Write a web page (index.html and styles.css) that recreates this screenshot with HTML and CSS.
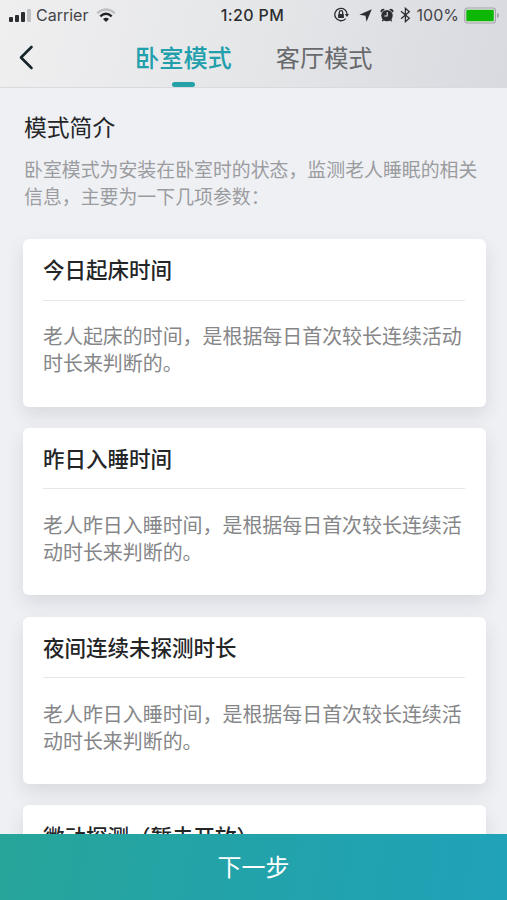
FILE: index.html
```html
<!DOCTYPE html>
<html lang="zh-CN">
<head>
<meta charset="utf-8">
<meta name="viewport" content="width=device-width, initial-scale=1">
<title>模式简介</title>
<link rel="stylesheet" href="styles.css">
</head>
<body>
<div class="app">
  <header class="header">
    <div class="status">
      <div class="status-left">
        <svg class="signal" width="24" height="15" viewBox="0 0 24 15"><rect x="1" y="9" width="4" height="5" rx="1"/><rect x="7" y="7" width="4" height="7" rx="1"/><rect x="13" y="4" width="4" height="10" rx="1"/><rect x="19" y="1" width="4" height="13" rx="1" fill="#bfc0c2"/></svg>
        <span class="carrier">Carrier</span>
        <svg class="wifi" width="20" height="15" viewBox="0 0 20 15" fill="none" stroke-width="2.4"><path d="M1.2 5.2Q10-2 18.8 5.2" stroke="#bfc0c2"/><path d="M4.3 8.3Q10 3.2 15.7 8.3" stroke="#222"/><path d="M7 11Q10 8.5 13 11L10 14Z" fill="#222"/></svg>
      </div>
      <span class="clock">1:20 PM</span>
      <div class="status-right">
        <svg class="lock" width="16" height="16" viewBox="0 0 16 16" fill="none" stroke="#2b2d30" stroke-width="1.3"><path d="M12.7 11.6A6.2 6.2 0 1 1 14.2 7.4"/><path d="M11.8 7H16L14 10Z" fill="#2b2d30" stroke="none"/><rect x="5.1" y="7" width="5.8" height="4" rx=".5" fill="#2b2d30" stroke="none"/><path d="M6.3 7V5.4a1.7 1.7 0 0 1 3.4 0V7"/></svg>
        <svg class="arrow" width="13" height="13" viewBox="0 0 13 13"><path d="M12.8.3L7.5 12.7L6.5 6.8L.3 5.8Z"/></svg>
        <svg class="alarm" width="14" height="14" viewBox="0 0 14 14"><circle cx="7" cy="7.6" r="5.7"/><path d="M.5 4Q.3.8 4.1.8L4.6 1.5L1.2 4.6ZM13.5 4Q13.7.8 9.9.8L9.4 1.5L12.8 4.6ZM2.7 11.3L4 12.5L2.7 13.6L1.8 13ZM11.3 11.3L10 12.5L11.3 13.6L12.2 13Z"/><path d="M7.2 4v4H4.3" fill="none" stroke="#e1e2e5" stroke-width="1.1"/></svg>
        <svg class="bluetooth" width="11" height="16" viewBox="0 0 11 16" fill="none" stroke="#2b2d30" stroke-width="1.3"><path d="M1 4.3L9.3 11.3L5.4 14.7V1.3L9.3 4.7L1 11.7"/></svg>
        <span class="percent">100%</span>
        <svg class="battery" width="36" height="17" viewBox="0 0 36 17"><rect x=".8" y="1" width="30.6" height="15" rx="2.8" fill="#e7e2e7" stroke="#a1a2a8" stroke-width="1.2"/><rect x="2.3" y="2.7" width="27.5" height="11.5" rx="1" fill="#0cb804"/><path d="M33 6q2 .4 2 2.5T33 11Z" fill="#a1a2a8"/></svg>
      </div>
    </div>
    <nav class="nav">
      <svg class="back" width="16" height="25" viewBox="0 0 16 25" fill="none" stroke="#17252b" stroke-width="2.6" stroke-linecap="round" stroke-linejoin="round"><path d="M12.5 2L2 12.5L12.5 23"/></svg>
      <span class="tab active">卧室模式</span>
      <span class="tab">客厅模式</span>
    </nav>
  </header>
  <main class="content">
    <h1>模式简介</h1>
    <p class="intro">卧室模式为安装在卧室时的状态，监测老人睡眠的相关<br>信息，主要为一下几项参数：</p>
    <div class="cards">
      <section class="card"><h2>今日起床时间</h2><p>老人起床的时间，是根据每日首次较长连续活动<br>时长来判断的。</p></section>
      <section class="card"><h2>昨日入睡时间</h2><p>老人昨日入睡时间，是根据每日首次较长连续活<br>动时长来判断的。</p></section>
      <section class="card"><h2>夜间连续未探测时长</h2><p>老人昨日入睡时间，是根据每日首次较长连续活<br>动时长来判断的。</p></section>
      <section class="card"><h2>微动探测（暂未开放）</h2></section>
    </div>
  </main>
  <footer class="next">下一步</footer>
</div>
</body>
</html>
```
FILE: styles.css
```css
* { box-sizing: border-box; }
body { margin: 0; font-family: "Noto Sans CJK SC", sans-serif; color: #242527; }
h1, h2, p { margin: 0; }
svg { display: block; flex: none; }
.app { height: 900px; width: 507px; display: flex; flex-direction: column; overflow: hidden; background: #eff0f4; }
.header { height: 88px; flex: none; background: linear-gradient(105deg, #efeff0 0%, #e5e6e8 50%, #d9dae0 100%); border-bottom: 1px solid #d9dadd; }
.status { height: 30px; display: grid; grid-template-columns: 1fr auto 1fr; align-items: center; padding: 0 8px; font-family: Inter, sans-serif; font-size: 16px; line-height: 20px; color: #2b2d30; fill: #2b2d30; }
.status-left, .status-right { display: flex; align-items: center; }
.status-right { justify-content: flex-end; }
.carrier { margin-left: 4px; font-size: 16px; color: #444548; }
.wifi { margin-left: 8px; }
.clock { margin-right: 2px; font-weight: 500; letter-spacing: .35px; }
.arrow { margin-left: 10px; }
.alarm { margin-left: 8px; }
.bluetooth { margin-left: 6px; }
.percent { margin-left: 6px; font-size: 16px; color: #444548; }
.battery { margin: 0 -1px 0 5px; }
.nav { height: 57px; display: flex; align-items: flex-start; padding-left: 19px; }
.back { margin-top: 15px; }
.tab { height: 57px; line-height: 54px; font-size: 24.2px; color: #68696c; margin-left: 44px; white-space: nowrap; }
.tab.active { margin-left: 100px; color: #229fac; font-weight: 500; display: flex; flex-direction: column; align-items: center; }
.tab.active::after { content: ""; flex: none; width: 23px; height: 5px; margin-top: -2px; border-radius: 3px; background: #25a2a8; }
.content { flex: 1; min-height: 0; overflow: hidden; padding: 22px 21px 0 22.5px; }
h1 { padding-left: 1.5px; font-size: 22.8px; line-height: 34px; font-weight: 400; }
.intro { margin: 11px 0 0 1.5px; font-size: 18.9px; line-height: 27px; color: #9b9c9f; white-space: nowrap; }
.cards { display: grid; gap: 21.3px; margin-top: 30px; }
.card { height: 167.5px; padding: 0 21px 0 20.5px; background: #fff; border-radius: 6px; box-shadow: 0 8px 18px rgba(45, 50, 60, .11); }
h2 { height: 61.5px; line-height: 60px; font-size: 21.5px; font-weight: 500; border-bottom: 1px solid #e6e7e9; white-space: nowrap; }
.card:last-child h2 { line-height: 62px; }
.card p { margin-top: 21.6px; font-size: 19.95px; line-height: 27px; color: #858688; white-space: nowrap; }
.next { flex: none; height: 66.5px; line-height: 64px; text-align: center; color: #fff; font-size: 24px; background: linear-gradient(100deg, #27a59a, #22a3aa 50%, #20a2b9); }
```
